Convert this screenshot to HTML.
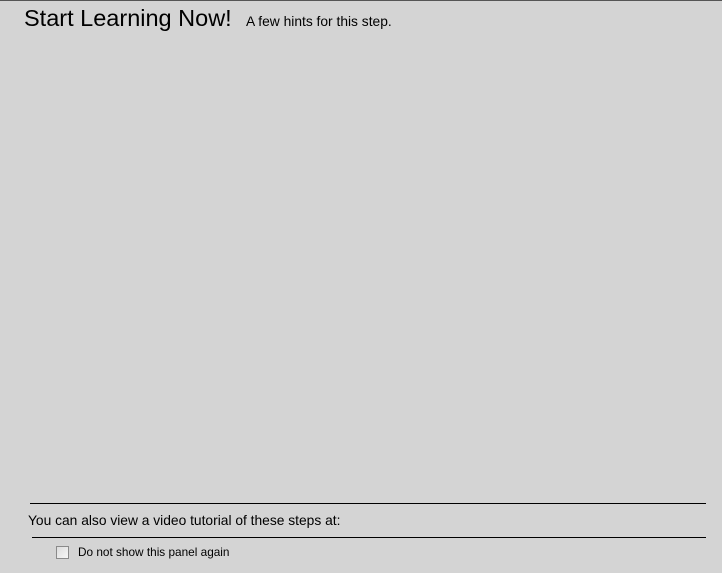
<!DOCTYPE html>
<html><head><style>
html,body{margin:0;padding:0}
body{width:722px;height:573px;background:#d4d4d4;position:relative;overflow:hidden;font-family:"Liberation Sans",Arial,sans-serif;color:#000}
.top{position:absolute;left:0;top:0;width:722px;height:1px;background:#555}
.t{position:absolute;left:24px;top:5px;font-size:23.5px;white-space:nowrap}
.s{position:absolute;left:246px;top:14px;font-size:13.8px;white-space:nowrap}
.l1{position:absolute;left:30px;top:503px;width:676px;height:1px;background:#000}
.l2{position:absolute;left:32px;top:537px;width:674px;height:1px;background:#000}
.v{position:absolute;left:28px;top:513px;font-size:13.8px;white-space:nowrap}
.cb{position:absolute;left:56px;top:546px;width:11px;height:11px;border:1px solid #8a8a8a;background:linear-gradient(135deg,#dcdcdc,#f6f6f6)}
.d{position:absolute;left:78px;top:545px;font-size:11.8px;white-space:nowrap}
</style></head><body>
<div class="top"></div>
<div class="t">Start Learning Now!</div>
<div class="s">A few hints for this step.</div>
<div class="l1"></div>
<div class="v">You can also view a video tutorial of these steps at:</div>
<div class="l2"></div>
<div class="cb"></div>
<div class="d">Do not show this panel again</div>
</body></html>
